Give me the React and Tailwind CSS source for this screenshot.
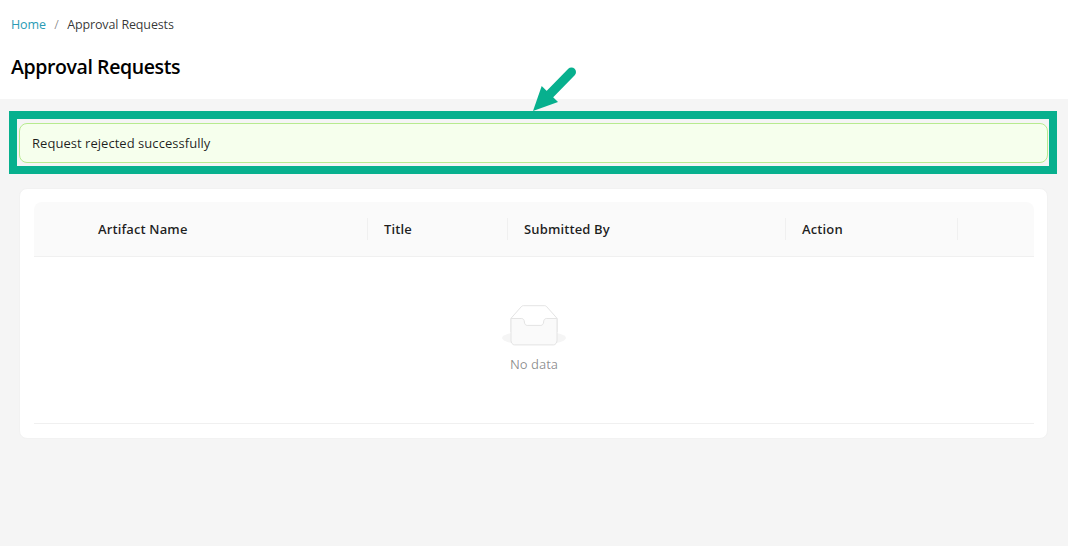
import { Fragment } from 'react'

const columns = [
  { label: 'Artifact Name', width: 'w-[333px]', pad: 'pl-[64px]' },
  { label: 'Title', width: 'w-[139px]', pad: 'pl-4' },
  { label: 'Submitted By', width: 'w-[277px]', pad: 'pl-4' },
  { label: 'Action', width: 'w-[171px]', pad: 'pl-4' },
]

function EmptyIcon() {
  return (
    <svg width="64" height="41" viewBox="0 0 64 41">
      <ellipse cx="32" cy="33" rx="32" ry="7" fill="#f5f5f5" />
      <path d="M55 13.3 44.800 1.800C44.300 1.100 43.600.7 42.800.7H21.200C20.400.7 19.700 1.100 19.200 1.800L9 13.300V27h46V13.300Z" fill="none" stroke="#e4e4e4" />
      <path d="M41.600 17c0-1.900 1.200-3.500 2.700-3.500H55v21.800c0 2.500-1.600 4.600-3.500 4.600h-39C10.600 39.900 9 37.800 9 35.300V13.500h10.700c1.500 0 2.700 1.600 2.700 3.500s1.200 3.400 2.700 3.400h13.800c1.500 0 2.700-1.600 2.700-3.400Z" fill="#fafafa" stroke="#e4e4e4" />
    </svg>
  )
}

export default function App() {
  return (
    <div className="relative min-h-[546px] bg-[#f5f5f5] font-['Open_Sans','Noto_Sans',sans-serif] text-[14px] text-[#000000e0]">
      <header className="h-[99px] bg-white pl-[11px] pt-[15px]">
        <nav className="flex h-[20px] items-center text-[12.5px] tracking-[-0.14px]">
          <span className="text-[#2a9bb5]">Home</span>
          <span className="mx-[8.5px] text-[#00000073]">/</span>
          <span className="text-[#000000cc]">Approval Requests</span>
        </nav>
        <h1 className="mt-[17px] text-[19.5px] leading-[30px] font-semibold tracking-[-0.4px] text-black">Approval Requests</h1>
      </header>

      <main className="pl-[19px] pr-[20px] pt-[24px]">
        <div className="flex h-[40px] items-center rounded-lg border border-[#b7eb8f] bg-[#f6ffed] pl-[12px] pt-[2px] text-[13px] tracking-[0.04px]">
          Request rejected successfully
        </div>

        <section className="mt-[25px] h-[251px] rounded-lg border border-[#f2f2f2] bg-white pl-[14px] pr-[13px] pt-[13px]">
          <div className="flex h-[55px] items-center rounded-t-lg border-b border-[#f0f0f0] bg-[#fafafa]">
            {columns.map((col) => (
              <Fragment key={col.label}>
                <div className={`${col.width} ${col.pad} pt-[2px] text-[13px] font-semibold tracking-[0.13px]`}>{col.label}</div>
                <div className="h-[22px] w-px bg-[#f0f0f0]" />
              </Fragment>
            ))}
          </div>
          <div className="flex h-[167px] flex-col items-center border-b border-[#f0f0f0] pt-[48px]">
            <EmptyIcon />
            <span className="mt-[7px] text-[13px] leading-[22px] text-[#00000073]">No data</span>
          </div>
        </section>
      </main>

      {/* annotation drawn over the page */}
      <div className="absolute left-[9px] top-[111px] h-[63px] w-[1048px] border-[8px] border-[#07b08e]" />
      <svg className="absolute left-[530px] top-[66px]" width="50" height="48" viewBox="0 0 50 48">
        <path d="M3 45 11.700 20 28 36Z" fill="#07b08e" />
        <path d="M20 28 41.500 6" stroke="#07b08e" strokeWidth="9" strokeLinecap="round" />
      </svg>
    </div>
  )
}
